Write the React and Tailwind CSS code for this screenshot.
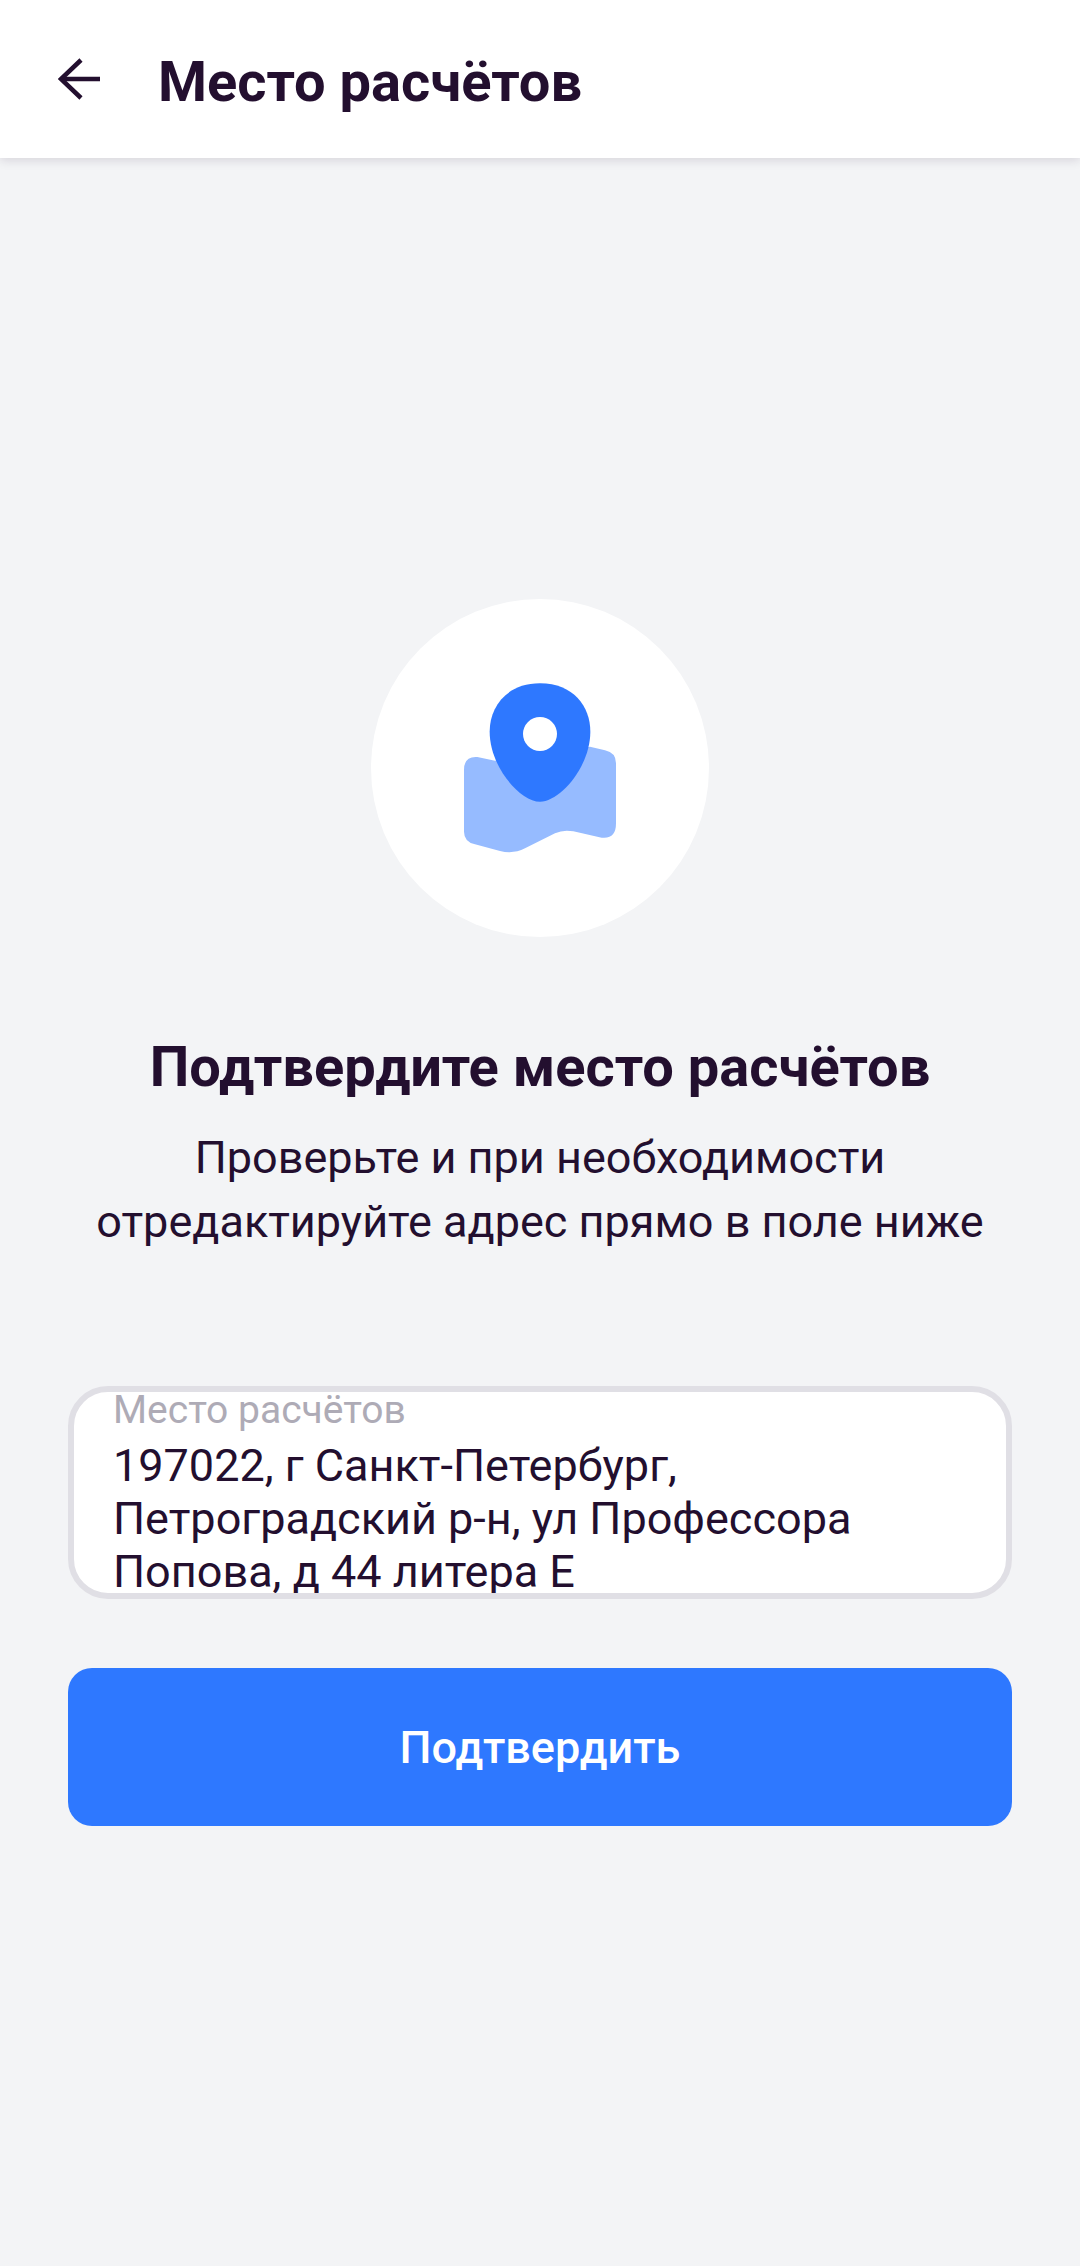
export default function App() {
  return (
    <div className="min-h-[2266px] bg-[#f3f4f6] font-['Roboto',sans-serif] text-[#230f2f] flex flex-col">
      {/* Header */}
      <header className="h-[158px] bg-white shadow-[0_2px_10px_rgba(35,15,47,0.14)] flex items-center pl-[58px] relative">
        <svg viewBox="0 0 43 42" className="w-[43px] h-[42px]" fill="none" stroke="#230f2f" strokeWidth="4.5">
          <path d="M23 2L3 21L23 40" />
          <path d="M3 21H42" />
        </svg>
        <h1 className="ml-[57px] mt-[6px] text-[56px] leading-[64px] font-bold">Место расчётов</h1>
      </header>

      <main className="flex flex-col items-center px-[68px] pt-[441px]">
        <div className="w-[338px] h-[338px] rounded-full bg-white">
          <svg viewBox="33 27 1014 1014" className="w-full h-full">
            <path
              d="M312 540Q312 498 352 501L405 512L690 470L735 481Q768 488 768 520L768 700Q768 748 725 743L640 724Q610 718 585 730L495 775Q460 793 420 783L345 763Q312 755 312 725Z"
              fill="#96bbff"
            />
            <path
              d="M540 280C640 280 691 350 691 425C691 530 600 635 540 635C480 635 389 530 389 425C389 350 440 280 540 280Z"
              fill="#2e78ff"
            />
            <circle cx="540" cy="432" r="51" fill="#fff" />
          </svg>
        </div>

        <h2 className="mt-[97px] text-[56px] leading-[66px] font-bold text-center whitespace-nowrap">
          Подтвердите место расчётов
        </h2>
        <p className="mt-[26px] text-[45px] leading-[64px] text-center whitespace-nowrap">
          Проверьте и при необходимости
          <br />
          отредактируйте адрес прямо в поле ниже
        </p>

        {/* Field */}
        <div className="mt-[132px] w-full h-[213px] bg-white border-[6px] border-[#e0dfe5] rounded-[40px] overflow-hidden pl-[39px] pr-[38px]">
          <p className="text-[39px] leading-[36px] text-[#aeabb6]">Место расчётов</p>
          <p className="mt-[11px] text-[45px] leading-[53px]">
            197022, г Санкт-Петербург,
            <br />
            Петроградский р-н, ул Профессора
            <br />
            Попова, д 44 литера Е
          </p>
        </div>

        <button className="mt-[69px] w-full h-[158px] pt-[2px] bg-[#2e78ff] rounded-[24px] text-white text-[45px] font-medium flex items-center justify-center">
          Подтвердить
        </button>
      </main>
    </div>
  );
}
